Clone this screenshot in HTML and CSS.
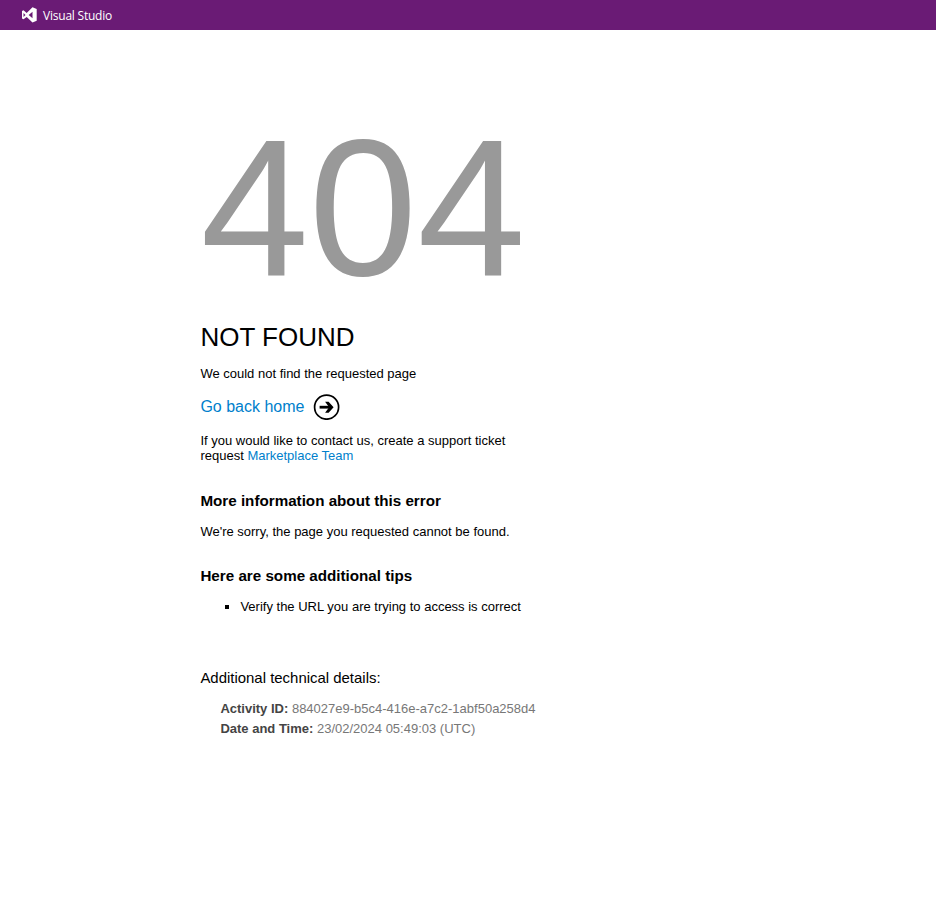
FILE: index.html
```html
<!DOCTYPE html>
<html lang="en">
<head>
<meta charset="utf-8">
<title>404 - Visual Studio</title>
<link rel="stylesheet" href="styles.css">
</head>
<body>
<header class="topbar">
  <svg class="logo" width="16" height="16" viewBox="0 0 16 16"><path fill="#fff" fill-rule="evenodd" d="M11.500 0.200 15.700 2v11.700l-4.200 1.700L5.700 9.900 2.500 12.200 1 11.500v-7.500L2.500 3.300l3.200 2.700zM11.500 4.800 7.700 8l3.800 3.200zM2.500 6v4l2-2z"/></svg>
  <span class="brand">Visual Studio</span>
</header>
<main class="content">
  <div class="code">404</div>
  <h1 class="title">NOT FOUND</h1>
  <p class="lead">We could not find the requested page</p>
  <a class="home" href="#"><span>Go back home</span>
    <svg width="27" height="26" viewBox="-0.600 0 27 26"><circle cx="13" cy="13.200" r="12" fill="none" stroke="#000" stroke-width="1.700"/><path d="M11.500 7.700h3.500l5 5.500-5 5.500h-3.500L15.500 13.200z" fill="#000"/><path d="M6 13.200h12" stroke="#000" stroke-width="2.800"/></svg>
  </a>
  <p class="contact"><span>If you would like to contact us, create a support ticket</span><br><span>request</span> <a href="#">Marketplace Team</a></p>
  <h2 class="info">More information about this error</h2>
  <p class="sorry">We're sorry, the page you requested cannot be found.</p>
  <h2 class="tips">Here are some additional tips</h2>
  <ul class="list"><li>Verify the URL you are trying to access is correct</li></ul>
  <h3 class="tech">Additional technical details:</h3>
  <div class="details">
    <div><b>Activity ID:</b> 884027e9-b5c4-416e-a7c2-1abf50a258d4</div>
    <div><b>Date and Time:</b> 23/02/2024 05:49:03 (UTC)</div>
  </div>
</main>
</body>
</html>
```
FILE: styles.css
```css
body { margin: 0; background: #fff; color: #000; font: 13px/15px "Liberation Sans", Arial, sans-serif; }
h1, h2, h3, p, ul { margin: 0; }
a { color: #007fcc; text-decoration: none; }
.topbar { display: flex; align-items: center; height: 30px; padding-left: 21px; background: #6a1b75; color: #fff; }
.brand { margin-left: 6px; padding-top: 2px; font: 12px/16px "Open Sans", "Noto Sans", sans-serif; letter-spacing: -0.22px; }
.content { width: 345px; margin-left: 200.4px; padding-top: 67px; }
.code { height: 223px; font-size: 195px; line-height: 220px; color: #999; }
.title { margin-top: 2px; font-size: 26px; line-height: 30px; font-weight: 400; }
.lead { margin-top: 14px; }
.home { display: flex; align-items: center; gap: 9px; height: 26px; margin-top: 13px; font-size: 16px; line-height: 18px; }
.contact { width: 320px; margin-top: 13px; }
.info, .tips { font-size: 15.2px; line-height: 17px; font-weight: 700; }
.info { margin-top: 29px; }
.sorry { margin-top: 15px; }
.tips { margin-top: 28px; }
.list { margin-top: 15px; padding-left: 40px; list-style: square; }
.tech { margin-top: 55px; font-size: 14.95px; line-height: 17px; font-weight: 400; }
.details { margin-top: 13px; padding-left: 20px; line-height: 20px; color: #777; }
.details b { color: #444; }
```
